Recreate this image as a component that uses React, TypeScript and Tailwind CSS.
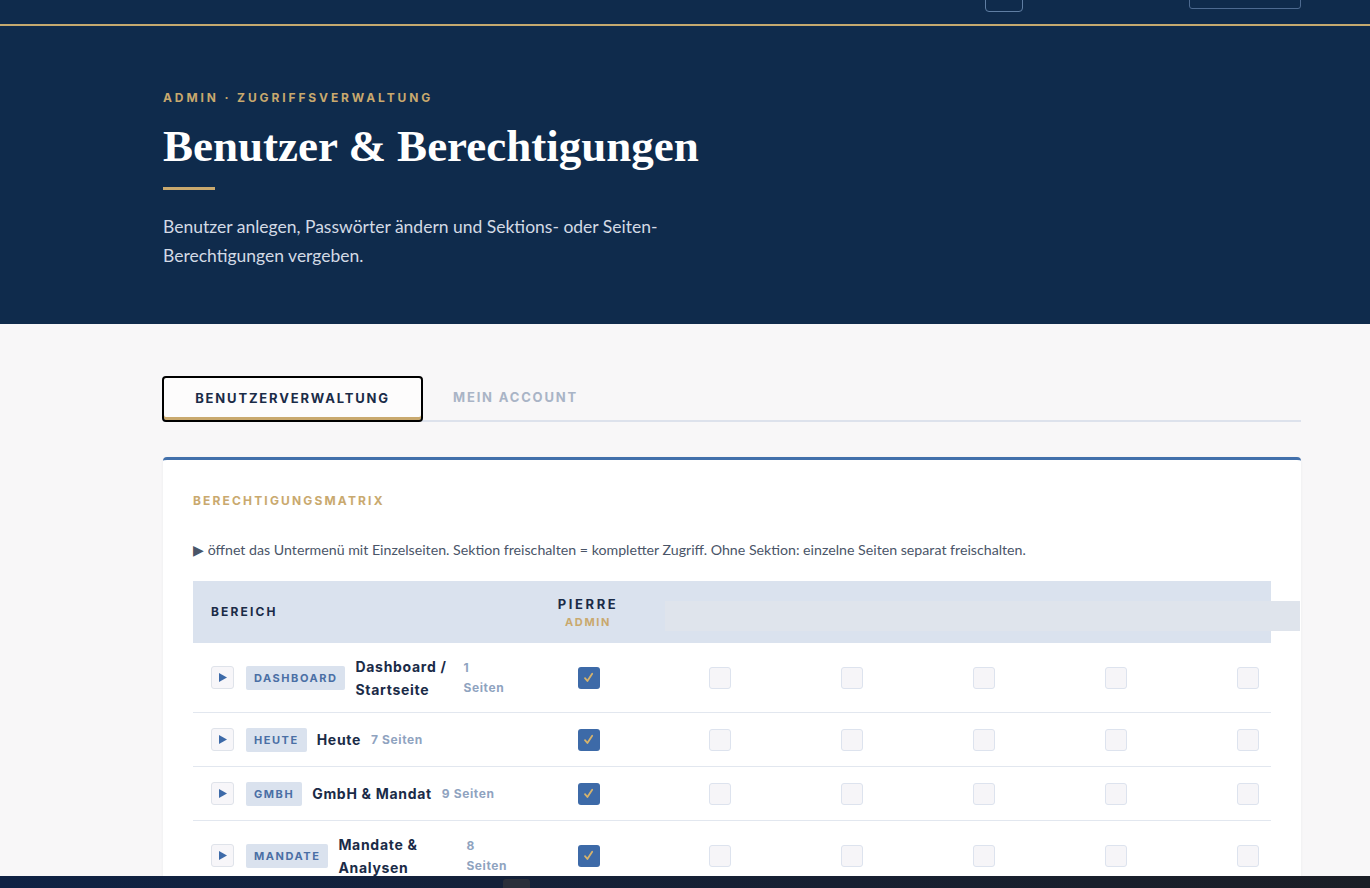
import React from "react";

const sans = "font-['Inter','Open_Sans',sans-serif]";

const rows = [
  { tag: "DASHBOARD", name: "Dashboard / Startseite", pages: 1, nameCls: "w-[98px]", pagesCls: "w-[42px]" },
  { tag: "HEUTE", name: "Heute", pages: 7, nameCls: "", pagesCls: "" },
  { tag: "GMBH", name: "GmbH & Mandat", pages: 9, nameCls: "", pagesCls: "" },
  { tag: "MANDATE", name: "Mandate & Analysen", pages: 8, nameCls: "w-[118px]", pagesCls: "w-[42px]" },
];

const PlayButton = () => (
  <span className="flex h-[23px] w-[23px] shrink-0 items-center justify-center rounded-[3px] border border-[#dfe3ea] bg-[#f7f6f9]">
    <svg width="8" height="9" viewBox="0 0 8 9">
      <polygon points="0,0 8,4.5 0,9" fill="#3d6aa8" />
    </svg>
  </span>
);

const Check = ({ on }: { on?: boolean }) =>
  on ? (
    <span className="flex h-[22px] w-[22px] items-center justify-center rounded-[3px] bg-[#3d6aa8]">
      <svg width="11" height="11" viewBox="0 0 11 11">
        <path d="M2 6.2 L4.4 9 L9.2 1.8" fill="none" stroke="#d6b36c" strokeWidth="1.8" strokeLinecap="round" strokeLinejoin="round" />
      </svg>
    </span>
  ) : (
    <span className="block h-[22px] w-[22px] rounded-[3px] border-[1.5px] border-[#dde3ee] bg-[#f6f5f8]" />
  );

export default function App() {
  return (
    <div className="min-h-screen bg-[#f8f7f8]">
      {/* top bar, scrolled so only its lower half shows */}
      <nav className="flex h-[26px] items-start justify-end border-b-2 border-[#c4a96f] bg-[#0f2b4c] pr-[69px]">
        <div className="mr-[166px] -mt-6 h-[36px] w-[38px] rounded-[4px] border border-[#5f7ea3]" />
        <div className="-mt-6 h-[33px] w-[112px] rounded-[3px] border border-[#4d6a90]" />
      </nav>

      <header className="bg-[#0f2b4c] pb-[54px] pl-[163px] pt-[63px]">
        <p className={`${sans} text-[12px] font-bold tracking-[0.24em] text-[#c9a96e]`}>
          ADMIN · ZUGRIFFSVERWALTUNG
        </p>
        <h1 className="mt-[12px] font-['Liberation_Serif',serif] text-[45px] font-bold leading-[54px] text-white">
          Benutzer &amp; Berechtigungen
        </h1>
        <div className="mt-[14px] h-[3px] w-[52px] bg-[#c9a96e]" />
        <p className="mt-[22px] w-[540px] font-['Lato',sans-serif] text-[17.5px] leading-[29px] text-[#d3dae5]">
          Benutzer anlegen, Passwörter ändern und Sektions- oder Seiten-Berechtigungen vergeben.
        </p>
      </header>

      <main className="ml-[163px] w-[1138px] pt-[52px]">
        <div className="flex items-end border-b-2 border-[#dde2ec]">
          <button
            className={`${sans} -mb-[2px] -ml-px flex h-[46px] w-[261px] items-center justify-center rounded-[4px] border-2 border-black bg-[#fdfcfc] text-[13px] font-bold tracking-[0.14em] text-[#1a2b47] shadow-[inset_0_-3px_0_#c9a96e]`}
          >
            BENUTZERVERWALTUNG
          </button>
          <button className={`${sans} ml-[30px] h-[44px] text-[13px] font-bold tracking-[0.14em] text-[#a9b4c6]`}>
            MEIN ACCOUNT
          </button>
        </div>

        <section className="mt-[35px] rounded-t-[4px] border-t-[3px] border-[#4270ab] bg-white px-[30px] pb-10 pt-[32px] shadow-[0_1px_3px_rgba(15,43,76,0.06)]">
          <h2 className={`${sans} text-[12px] font-bold tracking-[0.18em] text-[#c9a96e]`}>BERECHTIGUNGSMATRIX</h2>
          <p className="mt-[29px] font-['Lato',sans-serif] text-[14.2px] text-[#4a5568]">
            ▶ öffnet das Untermenü mit Einzelseiten. Sektion freischalten = kompletter Zugriff. Ohne Sektion: einzelne Seiten separat freischalten.
          </p>

          <div className={`${sans} mt-[21px] w-[1078px]`}>
            <div className="grid h-[62px] grid-cols-[329px_repeat(6,132px)] items-center bg-[#dae2ee]">
              <span className="pl-[18px] text-[12px] font-bold tracking-[0.18em] text-[#1a2b47]">BEREICH</span>
              <div className="flex flex-col items-center">
                <span className="text-[13px] font-bold leading-[18px] tracking-[0.2em] text-[#1a2b47]">PIERRE</span>
                <span className="mt-px text-[11px] font-bold leading-[16px] tracking-[0.15em] text-[#c9a96e]">ADMIN</span>
              </div>
              <div className="col-span-5 ml-[11px] mr-[14px] mt-2 h-[30px] bg-[#dfe4ec]" />
            </div>

            {rows.map((r) => (
              <div key={r.tag} className="grid grid-cols-[329px_repeat(6,132px)] items-center border-b border-[#e2e7ef]">
                <div className="flex items-center py-[11.5px] pl-[18px]">
                  <PlayButton />
                  <span className="ml-3 shrink-0 rounded-[2px] bg-[#dae2ee] px-2 py-[4px] text-[11px] font-bold tracking-[0.14em] text-[#4a6fa5]">
                    {r.tag}
                  </span>
                  <span className={`ml-2.5 ${r.nameCls} text-[14px] font-bold leading-[23px] tracking-[0.05em] text-[#1a2b47]`}>
                    {r.name}
                  </span>
                  <span className={`ml-2.5 ${r.pagesCls} text-[12px] font-bold leading-[20px] tracking-[0.05em] text-[#8fa3bf]`}>
                    {r.pages} Seiten
                  </span>
                </div>
                <div className="flex justify-center py-[15.5px] pl-px">
                  <Check on />
                </div>
                {[0, 1, 2, 3, 4].map((i) => (
                  <div key={i} className="flex justify-center py-[15.5px]">
                    <Check />
                  </div>
                ))}
              </div>
            ))}
          </div>
        </section>
      </main>

      {/* bottom taskbar strip overlaying the page */}
      <div className="fixed bottom-0 left-0 right-0 h-3 bg-gradient-to-r from-[#0f2244] to-[#1b1e26]">
        <div className="absolute left-[503px] top-[3px] h-[12px] w-[27px] rounded-[3px] bg-[#2a2f3a]" />
      </div>
    </div>
  );
}
